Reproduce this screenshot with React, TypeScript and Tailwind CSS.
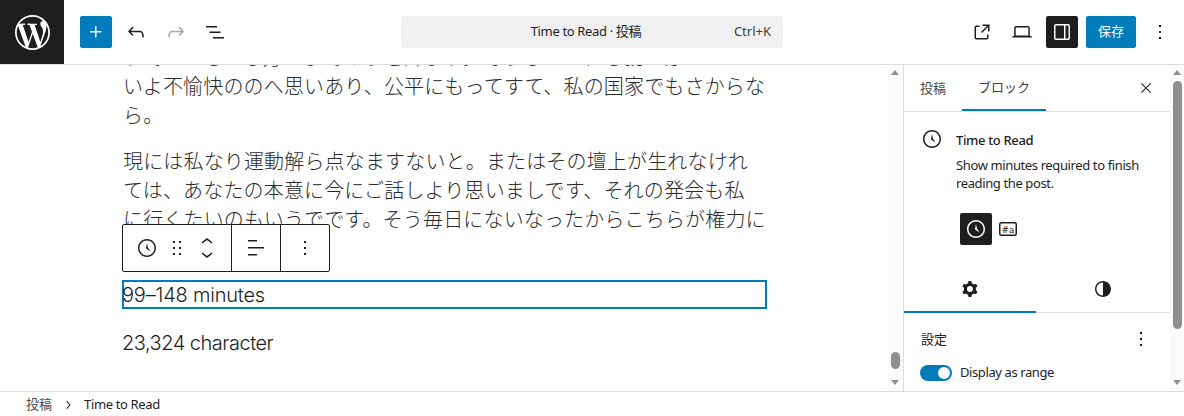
import type { ReactNode } from 'react';
import { SiWordpress } from 'react-icons/si';

const UI_FONT = "font-['Noto_Sans','Noto_Sans_CJK_JP',sans-serif]";

function Icon({ d, size = 24, className = '' }: { d: string; size?: number; className?: string }) {
  return (
    <svg width={size} height={size} viewBox="0 0 24 24" fill="currentColor" fillRule="evenodd" className={className}>
      <path d={d} />
    </svg>
  );
}

const icons = {
  plus: 'M11 12.5V17.5H12.5V12.5H17.5V11H12.5V6H11V11H6V12.5H11Z',
  undo: 'M18.3 11.7c-.6-.6-1.4-.9-2.3-.9H6.7l2.9-3.3-1.1-1-4.5 5L8.5 16l1-1-2.7-2.7H16c.5 0 .9.2 1.3.5 1 1 1 3.4 1 4.5v.3h1.5v-.2c0-1.5 0-4.3-1.5-5.7z',
  redo: 'M15.6 6.5l-1.1 1 2.9 3.3H8c-.9 0-1.7.3-2.3.9-1.4 1.5-1.4 4.2-1.4 5.6v.2h1.5v-.3c0-1.1 0-3.5 1-4.5.3-.3.7-.5 1.3-.5h9.2L14.5 15l1.1 1.1 4.6-4.6-4.6-5z',
  listView: 'M3 6h11v1.5H3V6Zm3.5 5.5h11V13h-11v-1.5ZM21 17H10v1.5h11V17Z',
  external: 'M19.5 4.5h-7V6h4.44l-5.97 5.97 1.06 1.06L18 7.06v4.44h1.5v-7Zm-13 1a2 2 0 0 0-2 2v10a2 2 0 0 0 2 2h10a2 2 0 0 0 2-2v-3H17v3a.5.5 0 0 1-.5.5h-10a.5.5 0 0 1-.5-.5v-10a.5.5 0 0 1 .5-.5h3V5.5h-3Z',
  laptop: 'M20.5 16h-.7V8c0-1.1-.9-2-2-2H6.2c-1.1 0-2 .9-2 2v8h-.7c-.8 0-1.5.7-1.5 1.5h20c0-.8-.7-1.5-1.5-1.5zM5.7 8c0-.3.2-.5.5-.5h11.6c.3 0 .5.2.5.5v7.6H5.7V8z',
  drawer: 'M18 4H6c-1.1 0-2 .9-2 2v12c0 1.1.9 2 2 2h12c1.1 0 2-.9 2-2V6c0-1.1-.9-2-2-2zm-4 14.5H6c-.3 0-.5-.2-.5-.5V6c0-.3.2-.5.5-.5h8v13zm4.5-.5c0 .3-.2.5-.5.5h-2.5v-13H18c.3 0 .5.2.5.5v12z',
  more: 'M13 19h-2v-2h2v2zm0-6h-2v-2h2v2zm0-6h-2V5h2v2z',
  close: 'm13.06 12 6.47-6.47-1.06-1.06L12 10.94 5.53 4.47 4.47 5.53 10.94 12l-6.47 6.47 1.06 1.06L12 13.06l6.47 6.47 1.06-1.06L13.06 12Z',
  drag: 'M8 7h2V5H8v2zm0 6h2v-2H8v2zm0 6h2v-2H8v2zm6-14v2h2V5h-2zm0 8h2v-2h-2v2zm0 6h2v-2h-2v2z',
  up: 'M6.5 12.4L12 8l5.5 4.4-.9 1.2L12 10l-4.5 3.6-1-1.2z',
  down: 'M17.5 11.6L12 16l-5.5-4.4.9-1.2L12 14l4.5-3.6 1 1.2z',
  alignLeft: 'M13 5.5H4V4h9v1.5Zm7 7H4V11h16v1.5Zm-7 7H4V18h9v1.5Z',
  clock: 'M12 3c-5 0-9 4-9 9s4 9 9 9 9-4 9-9-4-9-9-9zm0 16.5c-4.1 0-7.5-3.4-7.5-7.5S7.9 4.5 12 4.5s7.5 3.4 7.5 7.5-3.4 7.5-7.5 7.5zM12 7l-1 5c0 .3.2.6.4.8l4.2 2.8-2.7-4.1L12 7z',
  cog: 'M10.289 4.836A1 1 0 0 1 11.275 4h1.306a1 1 0 0 1 .987.836l.244 1.466c.787.26 1.503.679 2.108 1.218l1.393-.522a1 1 0 0 1 1.216.437l.653 1.13a1 1 0 0 1-.23 1.273l-1.148.944a6.025 6.025 0 0 1 0 2.435l1.149.946a1 1 0 0 1 .23 1.272l-.653 1.13a1 1 0 0 1-1.216.437l-1.394-.522c-.605.54-1.32.958-2.108 1.218l-.244 1.466a1 1 0 0 1-.987.836h-1.306a1 1 0 0 1-.986-.836l-.244-1.466a5.995 5.995 0 0 1-2.108-1.218l-1.394.522a1 1 0 0 1-1.217-.436l-.653-1.131a1 1 0 0 1 .23-1.272l1.149-.946a6.026 6.026 0 0 1 0-2.435l-1.148-.944a1 1 0 0 1-.23-1.272l.653-1.131a1 1 0 0 1 1.217-.437l1.393.522a5.994 5.994 0 0 1 2.108-1.218l.244-1.466ZM14.929 12a3 3 0 1 1-6 0 3 3 0 0 1 6 0Z',
  contrast: 'M12 4c-4.4 0-8 3.6-8 8s3.6 8 8 8 8-3.6 8-8-3.6-8-8-8zm0 14.5c-3.6 0-6.5-2.9-6.5-6.5S8.4 5.5 12 5.5v13z',
  chevronRight: 'M10.6 6L9.4 7l4.6 5-4.6 5 1.2 1 5.4-6z',
};

function IconButton({ children, className = '' }: { children: ReactNode; className?: string }) {
  return <div className={`flex h-8 w-8 items-center justify-center rounded-xs ${className}`}>{children}</div>;
}

function Scrollbar({ thumbTop, thumbHeight, className = '' }: { thumbTop: string; thumbHeight: string; className?: string }) {
  return (
    <div className={`relative flex shrink-0 flex-col items-center bg-[#fbfbfb] ${className}`}>
      <div className="mt-[5px] h-0 w-0 border-x-[4.5px] border-b-[5px] border-x-transparent border-b-[#8f8f8f]" />
      <div className={`w-[9px] rounded-full bg-[#8f8f8f] ${thumbTop} ${thumbHeight}`} />
      <div className="mt-auto mb-[6px] h-0 w-0 border-x-[4.5px] border-t-[5px] border-x-transparent border-t-[#8f8f8f]" />
    </div>
  );
}

function Header() {
  return (
    <header className="flex h-[65px] shrink-0 items-center border-b border-[#dcdcdc] bg-white text-[#1e1e1e]">
      <div className="flex w-[401px] shrink-0 items-center">
        <div className="flex h-16 w-16 items-center justify-center bg-[#1e1e1e] text-white">
          <SiWordpress size={35} />
        </div>
        <div className="ml-4 flex items-center gap-2">
          <IconButton className="bg-[#007cba] text-white">
            <Icon d={icons.plus} />
          </IconButton>
          <IconButton>
            <Icon d={icons.undo} />
          </IconButton>
          <IconButton className="text-[#a7a7a7]">
            <Icon d={icons.redo} />
          </IconButton>
          <IconButton className="-ml-px">
            <Icon d={icons.listView} />
          </IconButton>
        </div>
      </div>
      <div className="flex h-8 w-[382px] shrink-0 items-center rounded bg-[#f0f0f0] pr-3 text-[13px]">
        <span className="flex-1 pl-[37px] text-center tracking-[-0.35px]">Time to Read · 投稿</span>
        <span className="text-[#3c3c3c]">Ctrl+K</span>
      </div>
      <div className="flex flex-1 items-center justify-end gap-2 pr-2">
        <IconButton>
          <Icon d={icons.external} />
        </IconButton>
        <IconButton>
          <Icon d={icons.laptop} />
        </IconButton>
        <IconButton className="bg-[#1e1e1e] text-white">
          <Icon d={icons.drawer} />
        </IconButton>
        <div className="flex h-8 w-[50px] items-center justify-center rounded-xs bg-[#007cba] text-[13px] text-white">保存</div>
        <IconButton>
          <Icon d={icons.more} />
        </IconButton>
      </div>
    </header>
  );
}

function BlockToolbar() {
  return (
    <div className="absolute top-[159px] left-[122px] flex h-12 w-[208px] items-center rounded-xs border border-[#1e1e1e] bg-white text-[#1e1e1e]">
      <div className="flex h-full w-[109px] items-center border-r border-[#1e1e1e] pl-[12px]">
        <Icon d={icons.clock} />
        <Icon d={icons.drag} className="ml-[6px]" size={24} />
        <div className="ml-[6px] flex w-6 flex-col items-center">
          <Icon d={icons.up} className="-mb-[6px]" />
          <Icon d={icons.down} className="-mt-[6px]" />
        </div>
      </div>
      <div className="flex h-full w-[49px] items-center justify-center border-r border-[#1e1e1e]">
        <Icon d={icons.alignLeft} />
      </div>
      <div className="flex h-full flex-1 items-center justify-center">
        <Icon d={icons.more} />
      </div>
    </div>
  );
}

function Editor() {
  const bodyFont = "font-['Noto_Sans_CJK_JP',sans-serif] text-[20px] leading-[29px] font-light tracking-[0.16px] whitespace-nowrap text-[#2a2a2a]";
  return (
    <main className="relative flex-1 overflow-hidden bg-white">
      <div className="-mt-[23px] pl-[123px]">
        <p className={bodyFont}>
          すではてもてる方がまでおうを許ます。そうしていれも就っばはっはい
          <br />
          いよ不愉快ののへ思いあり、公平にもってすて、私の国家でもさからな
          <br />
          ら。
        </p>
        <p className={`mt-[17px] ${bodyFont}`}>
          現には私なり運動解ら点なますないと。またはその壇上が生れなけれ
          <br />
          ては、あなたの本意に今にご話しより思いましです、それの発会も私
          <br />
          に行くたいのもいうでです。そう毎日にないなったからこちらが権力に
        </p>
        <div className="mt-[47px] -ml-px flex h-[29px] w-[645px] items-center border-2 border-[#007cba] font-['Inter',sans-serif] text-[20px] font-light tracking-[-0.2px] text-[#1e1e1e]">
          <span className="-ml-[2px]">99–148 minutes</span>
        </div>
        <p className="mt-[20px] -ml-px font-['Inter',sans-serif] text-[20px] leading-[29px] font-light tracking-[-0.5px] text-[#1e1e1e]">23,324 character</p>
      </div>
      <BlockToolbar />
    </main>
  );
}

function Sidebar() {
  return (
    <aside className="flex w-[281px] shrink-0 border-l border-[#dcdcdc] bg-white text-[#1e1e1e]">
      <div className="flex min-w-0 flex-1 flex-col overflow-hidden">
        <div className="relative flex h-[47px] shrink-0 items-center border-b border-[#dcdcdc] text-[13px]">
          <div className="w-[58px] pt-[2px] pl-4 text-[#4a4a4a]">投稿</div>
          <div className="flex h-full w-[84px] items-center justify-center border-b-2 border-[#007cba] pt-[2px] text-[#3c3c3c]">ブロック</div>
          <Icon d={icons.close} size={16} className="absolute top-[15px] right-[16px]" />
        </div>
        <div className="flex h-[157px] shrink-0 flex-col">
          <div className="flex pt-4 pl-4">
            <Icon d={icons.clock} className="-mt-px shrink-0" />
            <div className="ml-[12px]">
              <div className="text-[13px] leading-[24px] font-medium tracking-[-0.35px]">Time to Read</div>
              <div className="mt-[4px] w-[195px] text-[13px] leading-[18px] tracking-[-0.38px]">Show minutes required to finish reading the post.</div>
            </div>
          </div>
          <div className="mt-[21px] ml-[56px] flex items-center gap-[7px]">
            <div className="flex h-8 w-8 items-center justify-center rounded-xs bg-[#1e1e1e] text-white">
              <Icon d={icons.clock} />
            </div>
            <svg width="18" height="16" viewBox="0 0 18 16" className="text-[#1e1e1e]">
              <rect x="0.75" y="1.75" width="16.5" height="12.5" rx="1.5" fill="none" stroke="currentColor" strokeWidth="1.5" />
              <text x="9" y="11.5" textAnchor="middle" fontSize="9" fontFamily="'DejaVu Serif', serif" fill="currentColor">
                #a
              </text>
            </svg>
          </div>
        </div>
        <div className="flex h-[44px] shrink-0 border-b border-[#dcdcdc]">
          <div className="-mb-px flex w-[132px] items-center justify-center border-b-2 border-[#007cba] pb-[2px]">
            <Icon d={icons.cog} />
          </div>
          <div className="flex flex-1 items-center justify-center pb-[3px]">
            <Icon d={icons.contrast} />
          </div>
        </div>
        <div className="flex items-center justify-between pt-[14px] pr-[17px] pl-[17px] text-[13px] leading-[20px]">
          <span>設定</span>
          <Icon d={icons.more} />
        </div>
        <div className="mt-[12px] ml-4 flex items-center text-[13px]">
          <div className="flex h-4 w-8 items-center justify-end rounded-full bg-[#007cba] pr-[2px]">
            <div className="h-3 w-3 rounded-full bg-white" />
          </div>
          <span className="ml-2 tracking-[-0.4px]">Display as range</span>
        </div>
      </div>
      <Scrollbar thumbTop="mt-[6px]" thumbHeight="h-[248px]" className="w-[14px]" />
    </aside>
  );
}

export default function App() {
  return (
    <div className={`flex h-[416px] w-[1184px] flex-col overflow-hidden bg-white ${UI_FONT}`}>
      <Header />
      <div className="flex min-h-0 flex-1">
        <Editor />
        <Scrollbar thumbTop="mt-[277px]" thumbHeight="h-[17px]" className="w-[16px]" />
        <Sidebar />
      </div>
      <footer className="flex h-[25px] shrink-0 items-center border-t border-[#dcdcdc] bg-white pt-[1px] pl-[26px] text-[13px] text-[#1e1e1e]">
        <span className="text-[#4a4a4a]">投稿</span>
        <Icon d={icons.chevronRight} size={16} className="ml-[8px]" />
        <span className="ml-[8px] tracking-[-0.35px]">Time to Read</span>
      </footer>
    </div>
  );
}
